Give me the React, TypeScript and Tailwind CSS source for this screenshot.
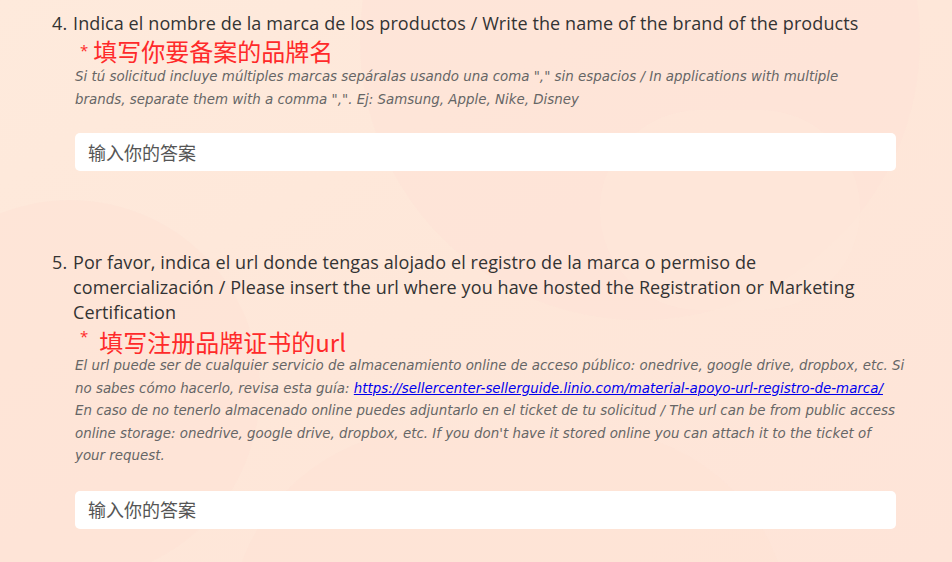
import React from "react";

const latin = { fontFamily: '"Open Sans", "Noto Sans CJK SC", sans-serif' };
const desc = { fontFamily: '"DejaVu Sans", "Noto Sans CJK SC", sans-serif' };
const cjk = { fontFamily: '"Noto Sans CJK SC", "Open Sans", sans-serif' };

function Answer() {
  return (
    <div
      className="ml-[23px] h-[38px] bg-white rounded-[5px] flex items-center pl-[13px] text-[18px] text-[#555]"
      style={cjk}
    >
      输入你的答案
    </div>
  );
}

function Lines({ lines, leading }: { lines: React.ReactNode[]; leading: string }) {
  return (
    <div className={`pl-[23px] italic text-[13.4px] text-[#666] ${leading}`} style={desc}>
      {lines.map((l, i) => (
        <div key={i} className="whitespace-nowrap">
          {l}
        </div>
      ))}
    </div>
  );
}

export default function App() {
  return (
    <div className="relative min-h-screen w-full overflow-hidden bg-[#fee6d8]" style={latin}>
      <div className="absolute inset-0 bg-gradient-to-br from-[#feeadc] via-[#fee7d9] to-[#fee4d8]" />
      <div className="absolute left-[360px] top-[-240px] w-[560px] h-[560px] rounded-full bg-[#fee3d7] opacity-60" />
      <div className="absolute left-[-120px] top-[200px] w-[380px] h-[380px] rounded-full bg-[#fee3d6] opacity-60" />
      <div className="absolute left-[600px] top-[110px] w-[260px] h-[200px] rounded-full bg-[#fde8da] opacity-60" />
      <div className="absolute left-[230px] top-[430px] w-[560px] h-[400px] rounded-full bg-[#fee2d6] opacity-60" />

      <div className="relative pl-[52px] pr-[56px] pt-[11px]">
        {/* Question 4 */}
        <div className="flex text-[18px] leading-[25px] tracking-[0.1px] text-[#333]">
          <span className="w-[21px] shrink-0">4.</span>
          <span>Indica el nombre de la marca de los productos / Write the name of the brand of the products</span>
        </div>
        <div className="pl-[28px] flex items-start text-[#ff2a2a] h-[29px]">
          <span className="text-[15px] leading-[20px] mt-[4px] mr-[5px]">*</span>
          <span className="text-[24px] leading-[29px]" style={cjk}>填写你要备案的品牌名</span>
        </div>
        <Lines
          leading="leading-[23px]"
          lines={[
            'Si tú solicitud incluye múltiples marcas sepáralas usando una coma "," sin espacios / In applications with multiple',
            'brands, separate them with a comma ",". Ej: Samsung, Apple, Nike, Disney',
          ]}
        />
        <div className="mt-[22px]">
          <Answer />
        </div>

        {/* Question 5 */}
        <div className="flex text-[18px] leading-[25px] tracking-[0.1px] text-[#333] mt-[79px]">
          <span className="w-[21px] shrink-0">5.</span>
          <span>
            Por favor, indica el url donde tengas alojado el registro de la marca o permiso de comercialización / Please insert the url where you have hosted the Registration or Marketing Certification
          </span>
        </div>
        <div className="pl-[28px] flex items-start text-[#ff2a2a] h-[30px]">
          <span className="text-[15px] leading-[20px] mt-[1px] mr-[11px]">*</span>
          <span className="text-[24px] leading-[30px] mt-[2px]" style={cjk}>填写注册品牌证书的url</span>
        </div>
        <Lines
          leading="leading-[22.5px]"
          lines={[
            'El url puede ser de cualquier servicio de almacenamiento online de acceso público: onedrive, google drive, dropbox, etc. Si',
            <>
              no sabes cómo hacerlo, revisa esta guía:{" "}
              <a className="text-[#0000ee] underline" href="#">
                https://sellercenter-sellerguide.linio.com/material-apoyo-url-registro-de-marca/
              </a>
            </>,
            'En caso de no tenerlo almacenado online puedes adjuntarlo en el ticket de tu solicitud / The url can be from public access',
            "online storage: onedrive, google drive, dropbox, etc. If you don't have it stored online you can attach it to the ticket of",
            'your request.',
          ]}
        />
        <div className="mt-[23px]">
          <Answer />
        </div>
      </div>
    </div>
  );
}
